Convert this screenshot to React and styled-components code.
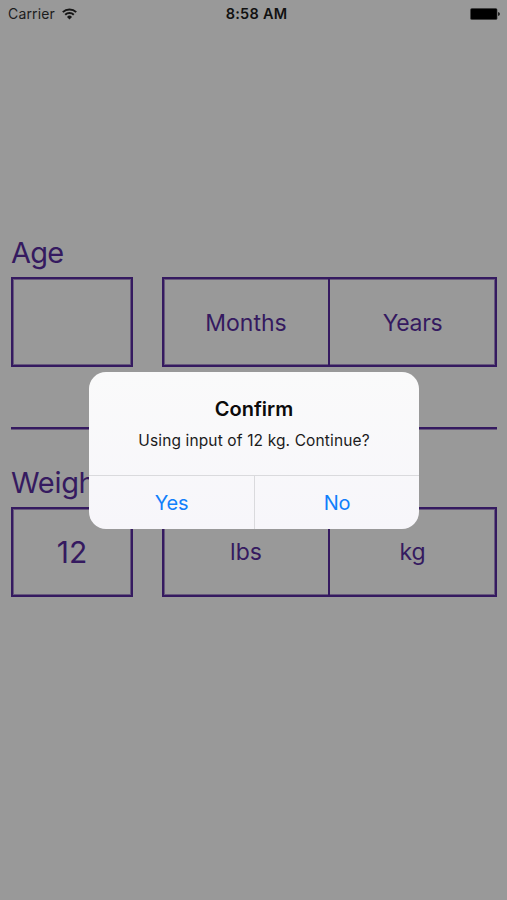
import React from "react";
import styled, { createGlobalStyle } from "styled-components";

const ink = "#351a60";
const softInk = "rgba(53, 26, 96, 0.5)";

const GlobalStyle = createGlobalStyle`
  * { box-sizing: border-box; }
  body { margin: 0; background: #999; }
`;

const Screen = styled.div`
  position: relative;
  width: 507px;
  height: 900px;
  overflow: hidden;
  background: #999;
  color: ${ink};
  font-family: Inter, "Liberation Sans", sans-serif;
`;

const StatusBar = styled.header`
  display: grid;
  grid-template-columns: 1fr auto 1fr;
  align-items: center;
  height: 27px;
  padding: 0 7px 0 8px;
  color: #1c1c1c;
  font-size: 14px;
`;

const Carrier = styled.div`
  display: flex;
  align-items: center;
  gap: 7px;
  letter-spacing: 0.15px;
`;

const Time = styled.div`
  padding-left: 5px;
  color: #111;
  font-size: 14.5px;
  font-weight: 600;
  letter-spacing: 0.25px;
`;

const Battery = styled.svg`
  justify-self: end;
`;

const Form = styled.main`
  display: flex;
  flex-direction: column;
  padding: 208px 10px 0 11px;
`;

const Label = styled.h2`
  height: 42px;
  margin: 0;
  font-size: 29px;
  font-weight: 400;
  line-height: 36px;
  letter-spacing: ${(p) => p.$tracking};
`;

const Row = styled.div`
  display: flex;
  gap: 29px;
  height: 90px;
`;

const ValueBox = styled.div`
  display: flex;
  align-items: center;
  justify-content: center;
  width: 122px;
  border: 2px solid ${ink};
  box-shadow: inset 0 0 0 1px ${softInk};
  font-size: 30px;
`;

const Segments = styled.div`
  display: grid;
  flex: 1;
  grid-template-columns: 166px 1fr;
  border: 2px solid ${ink};
  box-shadow: inset 0 0 0 1px ${softInk};
`;

const Segment = styled.button`
  margin: 0;
  padding: ${(p) => (p.$lowered ? "1px 0 0" : "0")};
  border: 0;
  border-right: ${(p) => (p.$divided ? `2px solid ${ink}` : "0")};
  background: none;
  color: inherit;
  font-family: inherit;
  font-size: 23px;
  letter-spacing: ${(p) => p.$tracking || "0"};
`;

const Divider = styled.hr`
  width: 100%;
  height: 3px;
  margin: 60px 0 35px;
  border: 0;
  background: linear-gradient(${ink} 2px, ${softInk} 2px);
`;

const Dialog = styled.section`
  position: absolute;
  top: 372px;
  left: 89px;
  display: flex;
  flex-direction: column;
  width: 330px;
  height: 157px;
  overflow: hidden;
  border-radius: 17px;
  background: linear-gradient(#fafafa, #f7f6fa);
  color: #0b0b0b;
  text-align: center;
`;

const Message = styled.div`
  flex: 1;
  padding-top: 24px;
`;

const Title = styled.h1`
  margin: 0;
  font-size: 20px;
  font-weight: 600;
  line-height: 26px;
`;

const Description = styled.p`
  margin: 7px 0 0;
  color: #1b1b1b;
  font-size: 15.5px;
  line-height: 24px;
  letter-spacing: 0.13px;
`;

const Actions = styled.div`
  display: grid;
  grid-template-columns: 166px 1fr;
  height: 54px;
  border-top: 1px solid #dadadd;
`;

const Action = styled.button`
  margin: 0;
  padding: 1px 0 0;
  border: 0;
  border-right: ${(p) => (p.$divided ? "1px solid #dadadd" : "0")};
  background: none;
  color: #117ffa;
  font-family: inherit;
  font-size: 20px;
  letter-spacing: -0.2px;
`;

function WifiIcon() {
  return (
    <svg width="15" height="12" viewBox="0 0 15 12" fill="none" stroke="#171717" strokeWidth="2">
      <path d="M0.8 4.1a9.6 9.6 0 0 1 13.4 0" />
      <path d="M3.2 6.7a6.2 6.2 0 0 1 8.6 0" />
      <path d="M7.5 11.4L5 8.9a3.5 3.5 0 0 1 5 0z" fill="#171717" stroke="none" />
    </svg>
  );
}

function BatteryIcon() {
  return (
    <Battery width="30" height="12" viewBox="0 0 30 12">
      <rect x="0.3" y="0.2" width="27" height="11.6" rx="1.5" fill="#222" />
      <rect x="1" y="1" width="25.6" height="10" rx="0.7" fill="#000" />
      <path d="M28 4q2 .6 2 2t-2 2z" fill="#222" />
    </Battery>
  );
}

export default function App() {
  return (
    <>
      <GlobalStyle />
      <Screen>
        <StatusBar>
          <Carrier>
            Carrier
            <WifiIcon />
          </Carrier>
          <Time>8:58 AM</Time>
          <BatteryIcon />
        </StatusBar>
        <Form>
          <Label $tracking="-0.8px">Age</Label>
          <Row>
            <ValueBox />
            <Segments>
              <Segment $divided $lowered>Months</Segment>
              <Segment $lowered $tracking="-0.3px">Years</Segment>
            </Segments>
          </Row>
          <Divider />
          <Label $tracking="-0.3px">Weight</Label>
          <Row>
            <ValueBox>12</ValueBox>
            <Segments>
              <Segment $divided>lbs</Segment>
              <Segment>kg</Segment>
            </Segments>
          </Row>
        </Form>
        <Dialog role="alertdialog" aria-label="Confirm">
          <Message>
            <Title>Confirm</Title>
            <Description>Using input of 12 kg. Continue?</Description>
          </Message>
          <Actions>
            <Action $divided>Yes</Action>
            <Action>No</Action>
          </Actions>
        </Dialog>
      </Screen>
    </>
  );
}
